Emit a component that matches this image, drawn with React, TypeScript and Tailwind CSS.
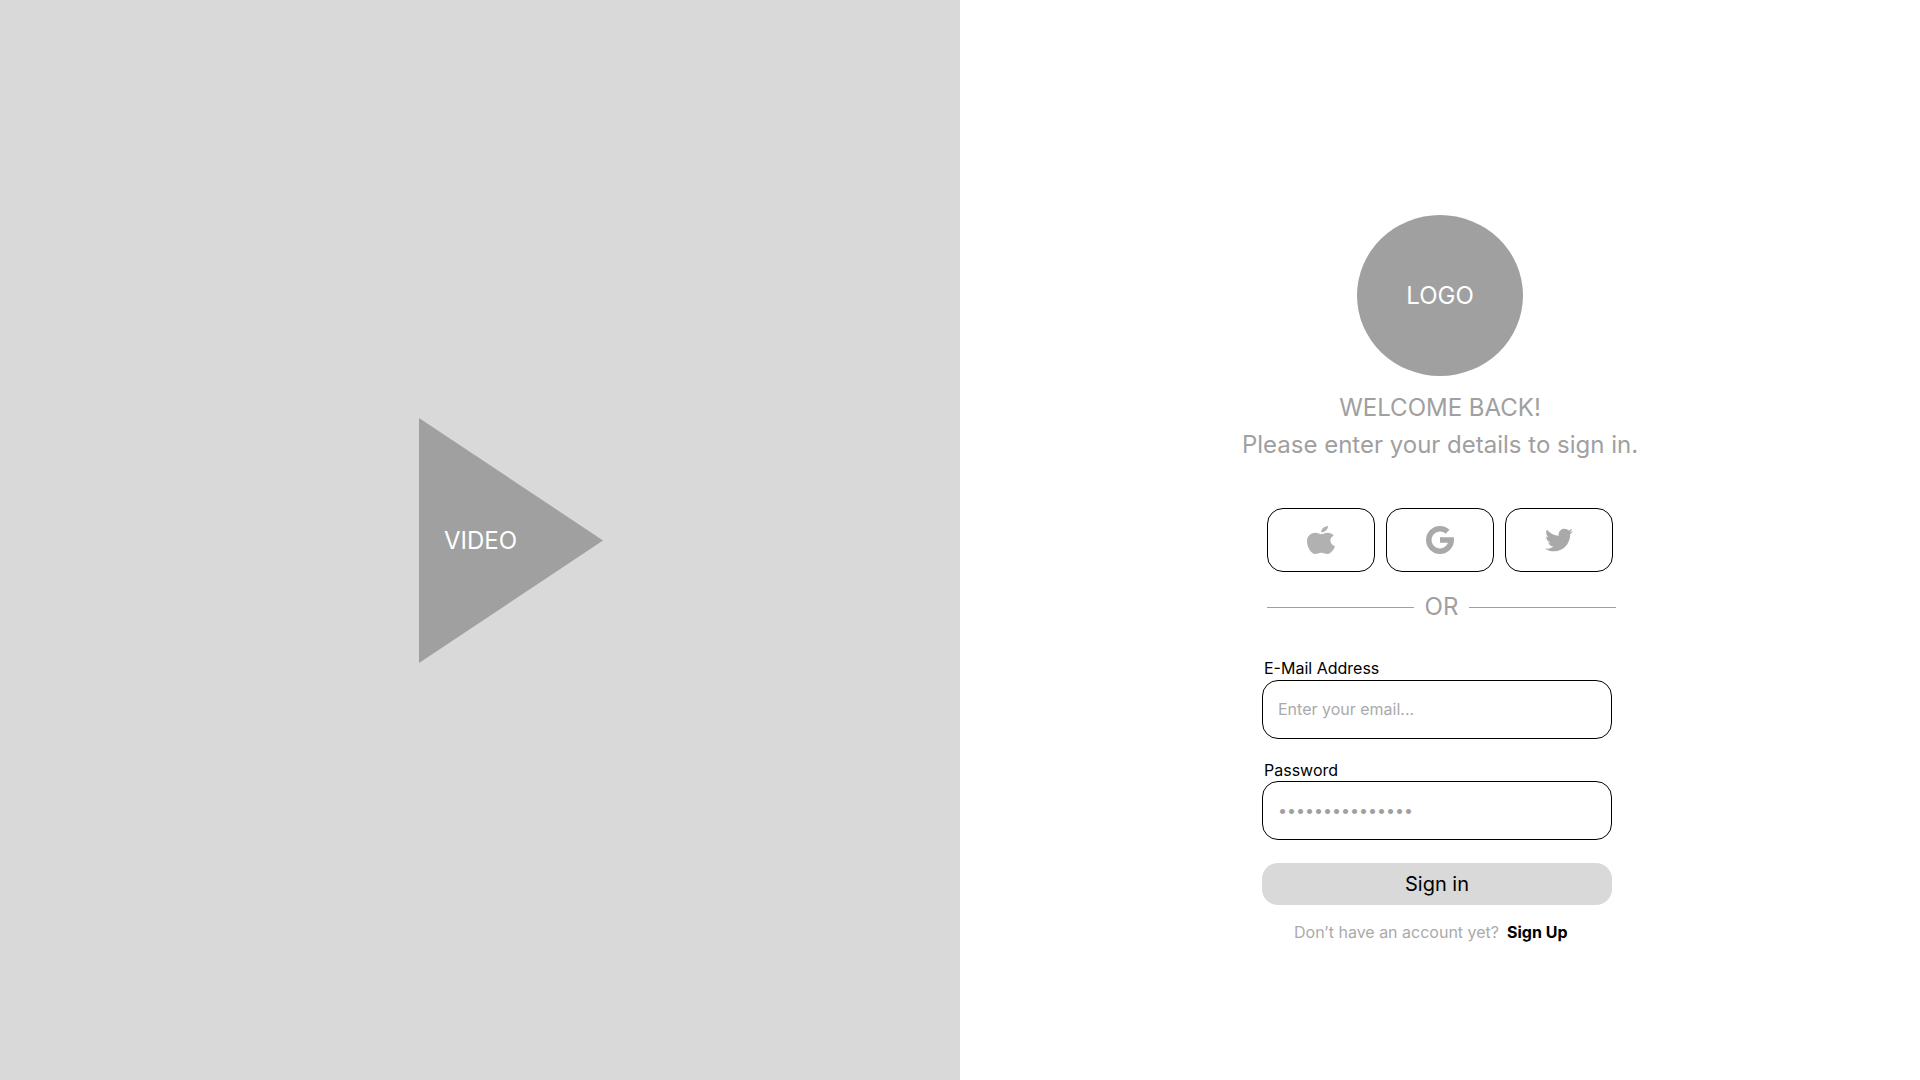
import { FaTwitter } from "react-icons/fa";

function AppleIcon() {
  return (
    <svg viewBox="0 0 28 28" className="size-7 fill-[#b1b1b1]" aria-hidden="true">
      <path d="M14.1 6.3C14 3.2 17.2.3 20.9 0c.4 3.1-2.6 6.4-6.8 6.3Z" />
      <path d="M26.8 9.6c-1.6-2-4-2.9-6.400-2.800-2.600.1-4.600 1.500-6 1.500-1.500 0-3.500-1.500-6.300-1.500C3.500 6.900 0 10.400 0 15.300c0 5.700 4 12.700 8.200 12.700 2.200 0 3.400-1.300 6.200-1.300 2.700 0 3.800 1.300 5.900 1.300 3.600 0 6.700-4.600 7.700-7.700-2.900-1.100-4.600-3.200-4.600-5.700 0-2.300 1.300-3.900 3.400-5Z" />
    </svg>
  );
}

function GoogleIcon() {
  return (
    <svg viewBox="4 4 40 40" className="size-7 fill-[#a9a9a9]" aria-hidden="true">
      <path d="M43.611 20.083H42V20H24v8h11.303c-1.649 4.657-6.080 8-11.303 8-6.627 0-12-5.373-12-12s5.373-12 12-12c3.059 0 5.842 1.154 7.961 3.039l5.657-5.657C34.046 6.053 29.268 4 24 4 12.955 4 4 12.955 4 24s8.955 20 20 20 20-8.955 20-20c0-1.341-.138-2.650-.389-3.917z" />
    </svg>
  );
}

const socialButton =
  "flex h-16 w-[108px] items-center justify-center rounded-2xl border border-black bg-white";
const label = "block pl-0.5 text-base leading-[22px]";
const field =
  "block h-[59px] w-full rounded-2xl border border-black bg-white px-[15px] pb-0.5 text-base placeholder:text-[#aaaaaa] outline-none";

export default function App() {
  return (
    <main className="grid min-h-screen grid-cols-2 bg-white font-['Inter',sans-serif] text-black">
      <section className="flex items-center justify-center bg-[#d9d9d9] pt-px pl-[62px]">
        <button type="button" className="grid items-center">
          <svg
            viewBox="0 0 184 245"
            className="col-start-1 row-start-1 w-[184px] fill-[#a0a0a0]"
            aria-hidden="true"
          >
            <path d="M0 0 184 122.500 0 245Z" />
          </svg>
          <span className="col-start-1 row-start-1 pl-[25px] text-left text-2xl text-white">
            VIDEO
          </span>
        </button>
      </section>

      <section className="flex flex-col items-center pt-[215px]">
        <div className="flex h-[161px] w-[166px] items-center justify-center rounded-[50%] bg-[#a0a0a0] text-2xl text-white">
          LOGO
        </div>
        <h1 className="mt-[13px] text-2xl leading-[37px] text-[#a0a0a0]">WELCOME BACK!</h1>
        <p className="text-2xl leading-[37px] text-[#a0a0a0]">
          Please enter your details to sign in.
        </p>

        <div className="mt-[45px] flex w-[356px] flex-col">
          <div className="flex flex-col pr-0.5 pl-[5px]">
            <div className="flex gap-[11px]">
              <button type="button" aria-label="Sign in with Apple" className={socialButton}>
                <AppleIcon />
              </button>
              <button type="button" aria-label="Sign in with Google" className={socialButton}>
                <GoogleIcon />
              </button>
              <button type="button" aria-label="Sign in with Twitter" className={socialButton}>
                <FaTwitter className="size-7 text-[#a9a9a9]" />
              </button>
            </div>
            <div className="mt-[17px] flex items-center gap-[11px] text-2xl leading-9 text-[#a0a0a0]">
              <span className="h-px flex-1 bg-[#a0a0a0]" />
              OR
              <span className="h-px flex-1 bg-[#a0a0a0]" />
            </div>
          </div>

          <form className="mt-8 w-[350px]">
            <label htmlFor="email" className={label}>
              E-Mail Address
            </label>
            <input id="email" type="email" placeholder="Enter your email..." className={`${field} mt-px`} />
            <label htmlFor="password" className={`${label} mt-5`}>
              Password
            </label>
            <input
              id="password"
              type="password"
              defaultValue="wireframe-login"
              className={`${field} text-[#a0a0a0]`}
            />
            <button
              type="submit"
              className="mt-[23px] flex h-[42px] w-full items-center justify-center rounded-2xl bg-[#d9d9d9] text-xl"
            >
              Sign in
            </button>
          </form>
          <p className="mt-[15px] flex gap-2 pl-8 text-base text-[#aaaaaa]">
            Don’t have an account yet?
            <a href="#signup" className="font-bold text-black">
              Sign Up
            </a>
          </p>
        </div>
      </section>
    </main>
  );
}
